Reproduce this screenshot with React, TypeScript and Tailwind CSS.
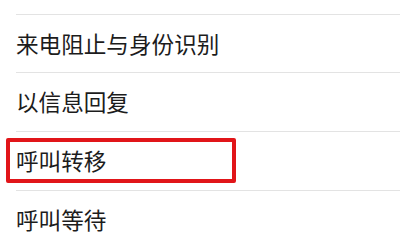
import React from 'react';

const items = ['来电阻止与身份识别', '以信息回复', '呼叫转移', '呼叫等待'];

const App = () => {
  return (
    <div
      className="w-[400px] h-[240px] overflow-hidden bg-white"
      style={{ fontFamily: '"Noto Sans CJK SC", "Noto Sans", sans-serif' }}
    >
      <div className="h-[14px]" />
      <div className="ml-4 border-t border-[#e3e3e3]">
        {items.map((label, index) => (
          <div
            key={label}
            className={`relative border-b border-[#e3e3e3] ${index === 0 ? 'h-[58px]' : 'h-[59px]'}`}
          >
            <div className="flex h-full items-center">
              <span className="text-[22.6px] leading-none text-[#1c1c1c] pt-[1px]">
                {label}
              </span>
            </div>
            {index === 2 && (
              <div className="absolute left-[-10px] top-[6px] w-[230px] h-[45px] border-4 border-[#e11519] rounded-[2px]" />
            )}
          </div>
        ))}
      </div>
    </div>
  );
};

export default App;
